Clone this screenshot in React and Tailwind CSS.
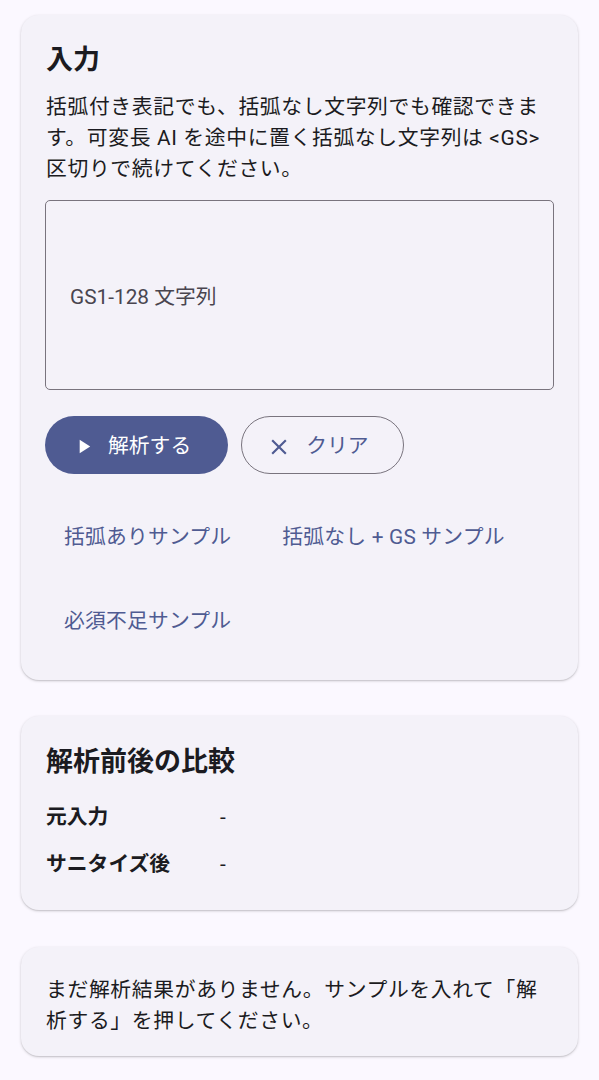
import React, { useState } from "react";

function PlayIcon() {
  return (
    <svg viewBox="0 0 24 24" className="w-[23px] h-[23px] fill-current">
      <path d="M8 5v14l11-7z" />
    </svg>
  );
}

function CloseIcon() {
  return (
    <svg viewBox="0 0 24 24" className="w-[26px] h-[26px] fill-current">
      <path d="M19 6.41L17.59 5 12 10.59 6.41 5 5 6.41 10.59 12 5 17.59 6.41 19 12 13.41 17.59 19 19 17.59 13.41 12z" />
    </svg>
  );
}

function Card({ className, children }) {
  return (
    <div
      className={
        "rounded-[18px] bg-[#f4f2f9] shadow-[0_1px_3px_rgba(0,0,0,0.18),0_1px_1px_rgba(0,0,0,0.08)] " +
        className
      }
    >
      {children}
    </div>
  );
}

export default function App() {
  const [input, setInput] = useState("");
  const samples = ["括弧ありサンプル", "括弧なし + GS サンプル", "必須不足サンプル"];

  return (
    <div className="min-h-[1080px] bg-[#fbf8ff] px-[21px] pt-[15px] pb-[24px] font-['Roboto','Noto_Sans_CJK_JP',sans-serif] text-[#1b1b21]">
      <Card className="px-[24px] pt-[28px] pb-[31px]">
        <h2 className="text-[27px] leading-[35px] font-bold px-[1px]">入力</h2>
        <p className="mt-[14px] px-[1px] text-[20.8px] leading-[31.2px] tracking-[0.65px]">
          括弧付き表記でも、括弧なし文字列でも確認できます。可変長 AI を途中に置く括弧なし文字列は &lt;GS&gt; 区切りで続けてください。
        </p>
        <div className="mt-[14px] h-[190px] rounded-[5px] border border-[#79747e] flex items-center pl-[24px] pt-[5px]">
          {input ? (
            <span className="text-[20.8px]">{input}</span>
          ) : (
            <span className="text-[20.8px] text-[#49454f]">GS1-128 文字列</span>
          )}
        </div>

        <div className="mt-[26px] flex gap-[13px]">
          <button
            className="h-[58px] rounded-full bg-[#4f5b92] text-white flex items-center pl-[27px] pr-[37px] pt-[4px] gap-[13px] text-[20.8px]"
            onClick={() => setInput(input)}
          >
            <PlayIcon />
            <span>解析する</span>
          </button>
          <button
            className="h-[58px] rounded-full border border-[#79747e] text-[#4f5b92] flex items-center pl-[24px] pr-[34px] pt-[4px] gap-[14px] text-[20.8px]"
            onClick={() => setInput("")}
          >
            <CloseIcon />
            <span>クリア</span>
          </button>
        </div>

        <div className="mt-[33px] flex flex-wrap gap-x-[13px] gap-y-[26px]">
          {samples.map((s) => (
            <button
              key={s}
              className="h-[58px] px-[19px] pt-[4px] rounded-full text-[#4f5b92] text-[20.8px] tracking-[0.2px]"
            >
              {s}
            </button>
          ))}
        </div>
      </Card>

      <Card className="mt-[36px] px-[25px] pt-[29px] pb-[30px]">
        <h2 className="text-[27px] leading-[35px] font-bold">解析前後の比較</h2>
        <div className="mt-[22px] flex flex-col gap-[16px] text-[20.8px] leading-[31.2px]">
          <div className="flex">
            <span className="w-[174px] font-bold">元入力</span>
            <span>-</span>
          </div>
          <div className="flex">
            <span className="w-[174px] font-bold">サニタイズ後</span>
            <span>-</span>
          </div>
        </div>
      </Card>

      <Card className="mt-[37px] px-[25px] pt-[28px] pb-[19px]">
        <p className="text-[20.8px] leading-[31.2px] tracking-[0.65px]">
          まだ解析結果がありません。サンプルを入れて「解析する」を押してください。
        </p>
      </Card>
    </div>
  );
}
